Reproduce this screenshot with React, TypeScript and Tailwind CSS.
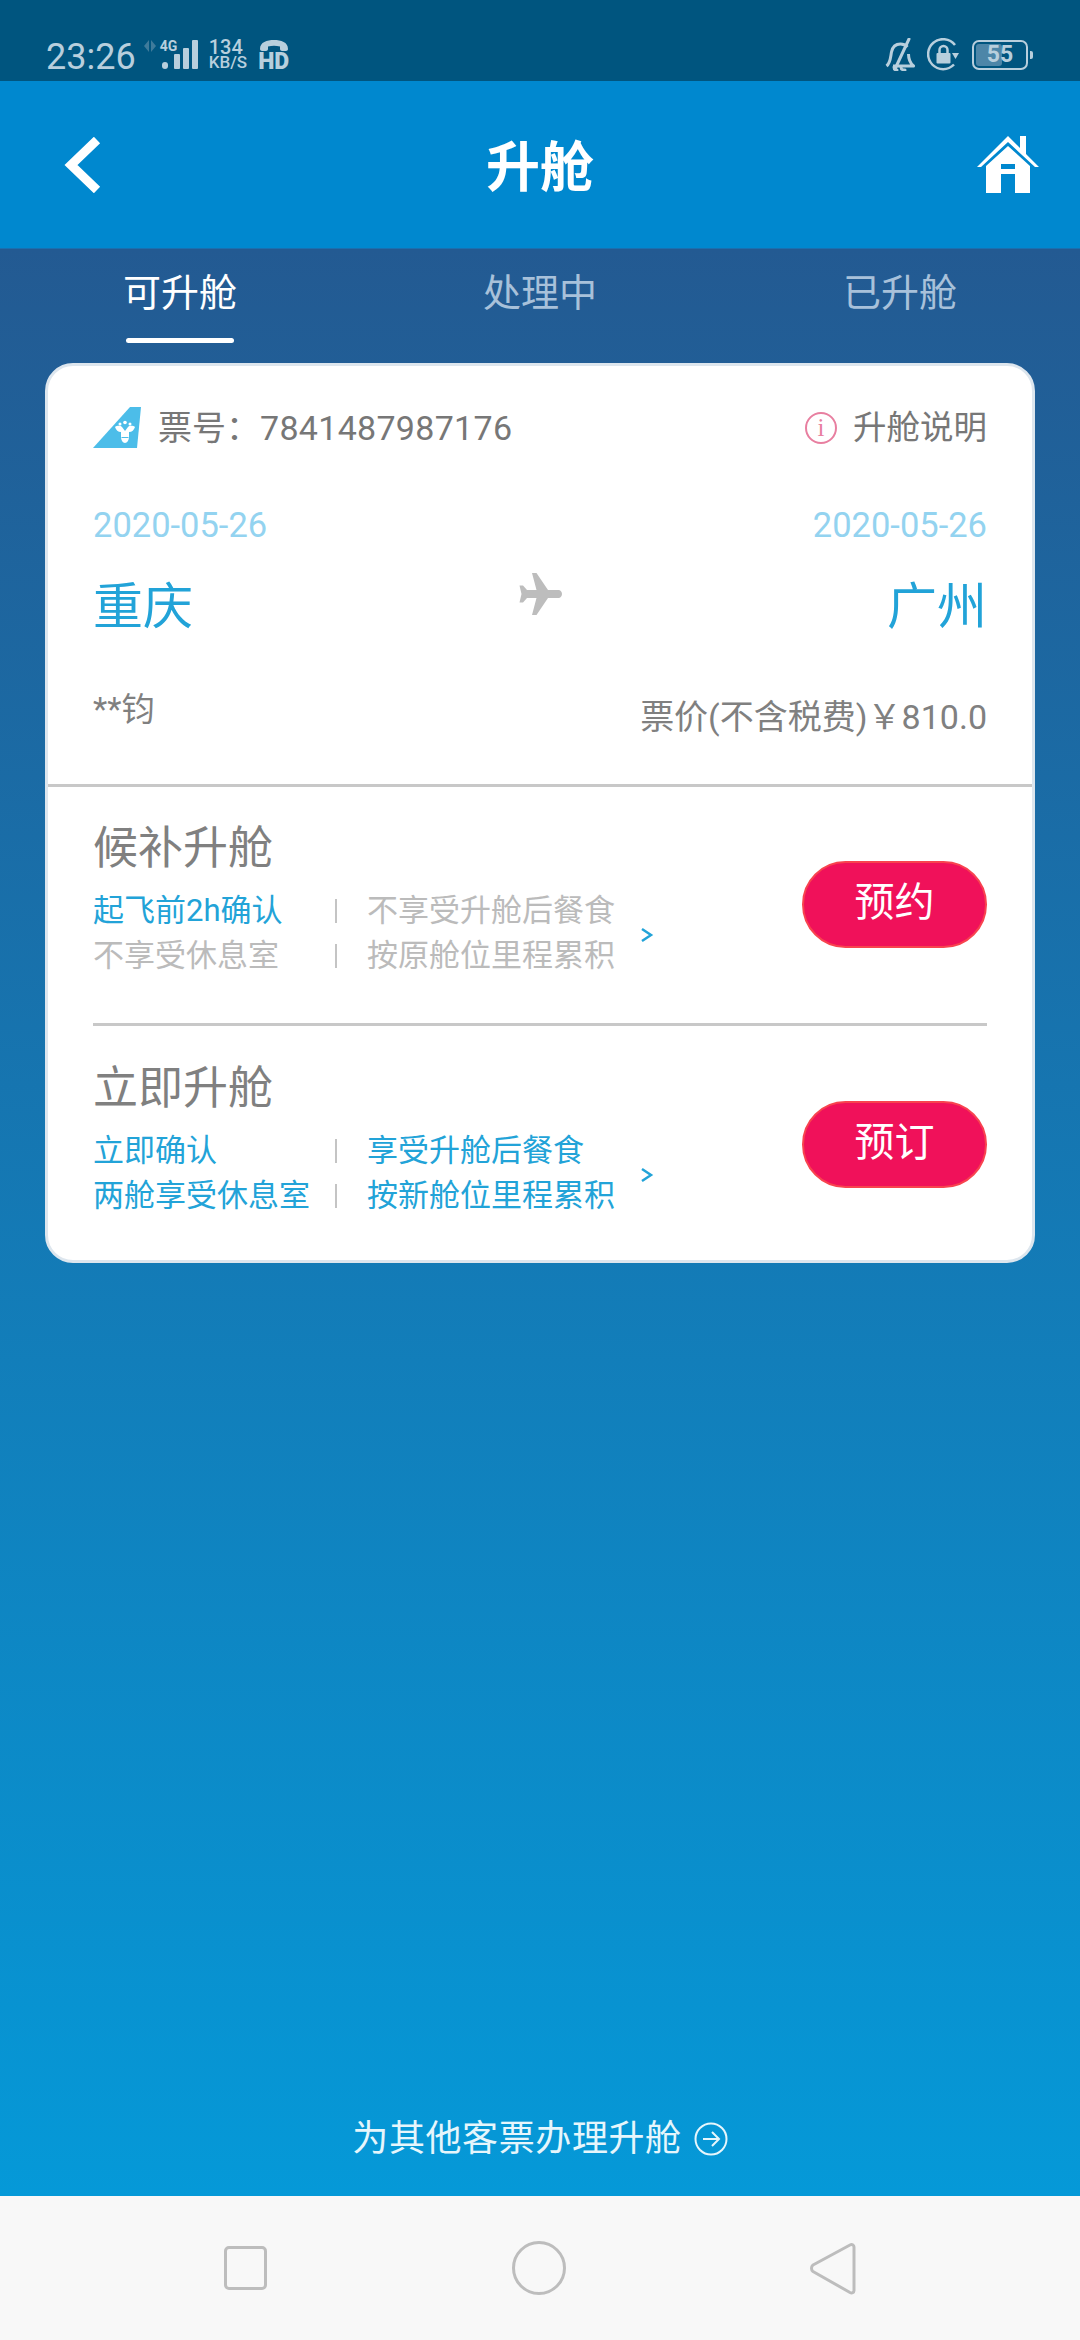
import React from "react";

const FONT = { fontFamily: 'Roboto, "Noto Sans CJK SC", sans-serif' };

function StatusBar() {
  return (
    <div className="h-[81px] shrink-0 bg-[#00557f] flex items-center justify-between text-[#b8cfdd] pl-[46px] pr-[47px] pt-[28px]">
      <div className="flex items-center">
        <span className="text-[36px] leading-none mt-[5px]">23:26</span>
        <svg width="12" height="12" viewBox="0 0 12 12" className="ml-[8px] -mt-[18px]"><path d="M5 0v12L0 6zM7 0v12l5-6z" fill="#3f7b9b" /></svg>
        <div className="relative ml-[4px] w-[38px] h-[29px]">
          <span className="absolute left-0 -top-[1px] text-[14px] font-bold leading-none">4G</span>
          <span className="absolute left-[2px] bottom-0 w-[6px] h-[7px] rounded-[3px] bg-[#b8cfdd]" />
          <span className="absolute left-[14px] bottom-0 w-[6px] h-[15px] rounded-[1px] bg-[#b8cfdd]" />
          <span className="absolute left-[23px] bottom-0 w-[6px] h-[21px] rounded-[1px] bg-[#b8cfdd]" />
          <span className="absolute left-[32px] bottom-0 w-[6px] h-[29px] rounded-[1px] bg-[#b8cfdd]" />
        </div>
        <div className="ml-[11px] flex flex-col items-start w-[38px]">
          <span className="text-[20px] leading-[16px] font-medium">134</span>
          <span className="text-[17px] leading-[15px] font-medium">KB/S</span>
        </div>
        <div className="ml-[12px] flex flex-col items-center w-[30px]">
          <svg width="30" height="13" viewBox="0 0 30 13"><path d="M1 10C1 3 8 1 15 1s14 2 14 9c0 1-1 2-2 2h-4c-1 0-2-1-2-2V7.500c-4-1-8-1-12 0V10c0 1-1 2-2 2H3c-1 0-2-1-2-2z" fill="#b8cfdd" /></svg>
          <span className="text-[23px] leading-[18px] font-black mt-[1px]">HD</span>
        </div>
      </div>
      <div className="flex items-center">
        <svg width="30" height="33" viewBox="0 0 30 33" fill="none" stroke="#b8cfdd" strokeWidth="3" className="mr-[12px]">
          <path d="M1.500 28c4-3 4-9 5-14 1-5 4-8 9-8 3 0 5 1 7 3M23.500 16c0 5 1.500 9 5 12H8" strokeLinejoin="round" />
          <path d="M24 1L10 31M9 29c0 3 2 3 3 3M16 29c0 3 2 3 4 3" strokeLinecap="round" />
        </svg>
        <svg width="33" height="33" viewBox="0 0 33 33" fill="none" className="mr-[12px]">
          <path d="M27 26.500A15 15 0 1 1 28 7" stroke="#b8cfdd" strokeWidth="2.500" />
          <path d="M25 15h7l-3.500 6z" fill="#b8cfdd" />
          <rect x="9.500" y="15" width="14" height="10.500" rx="1" fill="#b8cfdd" />
          <path d="M12.500 15v-3a4 4 0 0 1 8 0v3" stroke="#b8cfdd" strokeWidth="2.500" />
        </svg>
        <div className="relative w-[56px] h-[30px] rounded-[7px] border-2 border-[#b8cfdd] overflow-hidden flex items-center justify-center">
          <span className="absolute left-[2px] top-[2px] bottom-[2px] w-[26px] rounded-[3px] bg-[#4d86a8]" />
          <span className="relative text-[23px] leading-none font-bold">55</span>
        </div>
        <span className="ml-[2px] w-[3px] h-[8px] rounded-r-[2px] bg-[#b8cfdd]" />
      </div>
    </div>
  );
}

function Header() {
  return (
    <div className="h-[168px] shrink-0 bg-[#0088cf] border-b border-[#1a6fb0] flex items-center justify-between pl-[64px] pr-[41px] relative">
      <svg width="38" height="56" viewBox="0 0 38 56" fill="none" stroke="#fff" strokeWidth="9">
        <path d="M33 3L7 28l26 25" />
      </svg>
      <h1 className="text-[54px] font-bold text-white leading-none absolute left-0 right-0 text-center pt-[9px]">升舱</h1>
      <svg width="62" height="57" viewBox="0 0 62 57" fill="#fff">
        <path d="M0 31L31 0l12 12V0h6v18l13 13h-4L31 6 4 31z" />
        <path fillRule="evenodd" d="M9 30L31 10l22 20v27H38V38H24v19H9zM24 28v5h14v-5z" />
      </svg>
    </div>
  );
}

function Tabs() {
  const tabs = ["可升舱", "处理中", "已升舱"];
  return (
    <div className="h-[96px] grid grid-cols-3">
      {tabs.map((t, i) => (
        <div key={t} className="flex flex-col items-center pt-[22px]">
          <span className={`text-[38px] leading-[44px] ${i === 0 ? "text-white" : "text-[#a8c1da]"}`}>{t}</span>
          {i === 0 && <span className="mt-[23px] w-[108px] h-[5px] rounded-full bg-white" />}
        </div>
      ))}
    </div>
  );
}

function Logo() {
  return (
    <svg width="48" height="42" viewBox="0 0 48 42">
      <path d="M0 41L37 0h11l-4 41z" fill="#4cbde9" />
      <g fill="#fff">
        <path d="M22 20c3-2 6-1 7 0l3 4 3-4c1-1 4-2 7 0-1 3-3 5-6 5v5c0 3-2 6-4 6s-4-3-4-6v-5c-3 0-5-2-6-5z" />
        <circle cx="27" cy="17" r="1.500" />
        <circle cx="32" cy="15.500" r="1.800" />
        <circle cx="37" cy="17" r="1.500" />
      </g>
      <path d="M28.500 30.500h7" stroke="#4cbde9" strokeWidth="1" />
    </svg>
  );
}

function Plane() {
  return (
    <svg width="44" height="42" viewBox="0 0 44 42" fill="#bdbdbd">
      <path d="M14 0h4.500L30 17h10.500c2 0 3.500 1.800 3.500 4s-1.500 4-3.500 4H30L18.500 42H14l4.500-17H9l-4 4.500H1.500L3.500 21l-2-8.500H5L9 17h9.500z" />
    </svg>
  );
}

type Row = { text: string; on: boolean };

function Feature({ r, w }: { r: Row; w?: string }) {
  return <span className={`${w ?? ""} text-[31px] leading-[45px] whitespace-nowrap ${r.on ? "text-[#22a3d8]" : "text-[#bbbbbb]"}`}>{r.text}</span>;
}

function Option({ title, rows, action }: { title: string; rows: [Row, Row][]; action: string }) {
  return (
    <div className="flex items-center">
      <div className="w-[552px]">
        <div className="text-[45px] leading-[54px] text-[#808080]">{title}</div>
        <div className="mt-[12px] flex items-center">
          <div className="w-[244px] flex flex-col">
            {rows.map((r) => (
              <div key={r[0].text} className="flex items-center h-[45px]">
                <Feature r={r[0]} w="w-[243px]" />
                <span className="w-[2px] h-[24px] bg-[#c4c4c4] shrink-0" />
              </div>
            ))}
          </div>
          <div className="flex flex-col ml-[30px]">
            {rows.map((r) => (
              <Feature key={r[1].text} r={r[1]} />
            ))}
          </div>
          <span className="ml-[25px] mt-[4px]">
            <svg width="14" height="18" viewBox="0 0 14 18" fill="none" stroke="#22a3d8" strokeWidth="2.500"><path d="M2 3l9 6-9 6" /></svg>
          </span>
        </div>
      </div>
      <button className="ml-auto mt-[9px] w-[185px] h-[87px] rounded-[44px] border-[2px] border-[#f8434f] bg-[#f0115a] text-white text-[40px] leading-none pb-[3px]">{action}</button>
    </div>
  );
}

function Card() {
  return (
    <div className="mx-[45px] mt-[18px] h-[900px] rounded-[28px] border-[3px] border-[#dde6ee] bg-white">
      <div className="h-[418px] px-[45px]">
        <div className="h-[86px] pt-[38px] flex items-center justify-between">
          <div className="flex items-center">
            <Logo />
            <span className="ml-[17px] text-[34px] leading-none text-[#777777]">{"票号\uFF1A"}</span>
            <span className="text-[34px] leading-none tracking-[0.3px] text-[#777777]">7841487987176</span>
          </div>
          <div className="flex items-center">
            <span className="w-[32px] h-[32px] rounded-full border-2 border-[#e87fa0] text-[#e87fa0] text-[25px] leading-[27px] text-center" style={{ fontFamily: '"Liberation Serif", serif' }}>i</span>
            <span className="ml-[16px] text-[33.5px] leading-none text-[#777777]">升舱说明</span>
          </div>
        </div>
        <div className="mt-[53px] flex justify-between text-[34.5px] leading-[40px] text-[#93d3f0]">
          <span>2020-05-26</span>
          <span>2020-05-26</span>
        </div>
        <div className="relative mt-[32px] h-[60px] flex items-center justify-between text-[50px] leading-none text-[#22a3d8]">
          <span>重庆</span>
          <div className="absolute left-[425px] -top-[4px]"><Plane /></div>
          <span>广州</span>
        </div>
        <div className="mt-[53px] flex justify-between text-[#808080]">
          <span className="text-[33px] leading-[40px]">**钧</span>
          <span className="text-[34px] leading-[40px] mt-[7px]">{"票价(不含税费)\uFFE5810.0"}</span>
        </div>
      </div>
      <div className="h-[3px] bg-[#c8c8c8]" />
      <div className="px-[45px] pt-[35px]">
        <Option
          title="候补升舱"
          action="预约"
          rows={[
            [{ text: "起飞前2h确认", on: true }, { text: "不享受升舱后餐食", on: false }],
            [{ text: "不享受休息室", on: false }, { text: "按原舱位里程累积", on: false }],
          ]}
        />
        <div className="h-[3px] mt-[45px] mb-[36px] bg-[#c8c8c8]" />
        <Option
          title="立即升舱"
          action="预订"
          rows={[
            [{ text: "立即确认", on: true }, { text: "享受升舱后餐食", on: true }],
            [{ text: "两舱享受休息室", on: true }, { text: "按新舱位里程累积", on: true }],
          ]}
        />
      </div>
    </div>
  );
}

function NavBar() {
  return (
    <div className="h-[144px] shrink-0 bg-[#f8f8f8] flex items-center justify-between px-[224px]">
      <div className="w-[43px] h-[44px] rounded-[5px] border-[3px] border-[#bdbdbd]" />
      <div className="w-[54px] h-[54px] rounded-full border-[3px] border-[#bdbdbd]" />
      <svg width="46" height="53" viewBox="0 0 46 53" fill="none" stroke="#bdbdbd" strokeWidth="3" strokeLinejoin="round">
        <path d="M40 3L3 23c-2 1.500-2 5 0 6.500l37 21c2 1 4 0 4-2V5c0-2-2-3-4-2z" />
      </svg>
    </div>
  );
}

export default function App() {
  return (
    <div className="w-[1080px] h-[2340px] flex flex-col overflow-hidden" style={FONT}>
      <StatusBar />
      <Header />
      <div className="flex-1 flex flex-col bg-linear-to-b/srgb from-[#235a92] to-[#0599d8]">
        <Tabs />
        <Card />
        <div className="mt-auto h-[116px] flex items-center justify-center pt-[2px]">
          <span className="text-[36px] leading-none tracking-[0.6px] text-[#e6f6fc]">为其他客票办理升舱</span>
          <svg className="ml-[12px]" width="34" height="34" viewBox="0 0 34 34" fill="none" stroke="#e6f6fc" strokeWidth="2">
            <circle cx="17" cy="17" r="15.500" />
            <path d="M9 17h15M18 10l7 7-7 7" />
          </svg>
        </div>
      </div>
      <NavBar />
    </div>
  );
}
